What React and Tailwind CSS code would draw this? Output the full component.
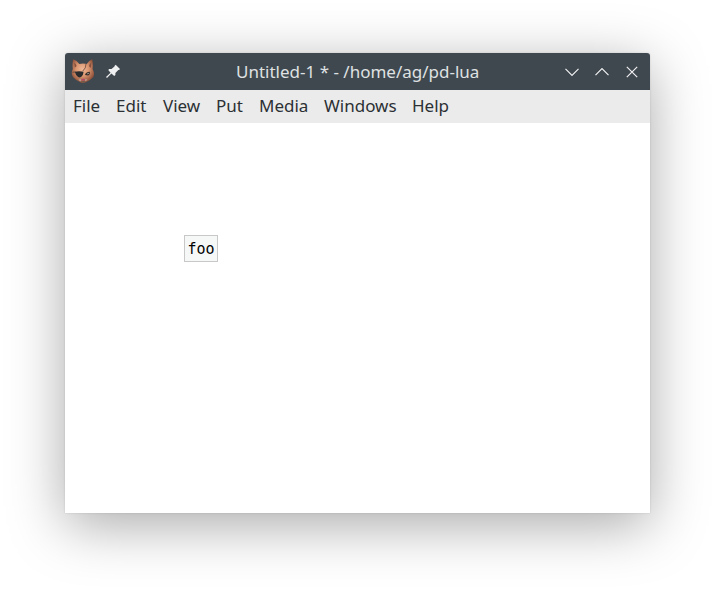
const menus = [
  ["File", "w-[43px]"],
  ["Edit", "w-[47px]"],
  ["View", "w-[53px]"],
  ["Put", "w-[43px]"],
  ["Media", "w-[65px]"],
  ["Windows", "w-[88px]"],
  ["Help", "w-[40px]"],
];

function CatIcon() {
  return (
    <svg width="24" height="25" viewBox="0 0 24 25" className="shrink-0">
      <defs>
        <radialGradient id="fur" cx="0.48" cy="0.42" r="0.58">
          <stop offset="0" stopColor="#f0b998" />
          <stop offset="0.5" stopColor="#d9956f" />
          <stop offset="1" stopColor="#8c4e38" />
        </radialGradient>
      </defs>
      <path d="M2.2 0.3 Q5.8 1.2 8.3 5 Q12 4 15.8 5 Q18 1.4 21.2 0.3 Q22.3 5 21.6 10 Q24 14.5 22.3 18 Q19.5 21 16.5 22.2 Q12.5 25.5 8.5 22.8 Q4.5 20.8 2 18 Q-0.4 14.5 1.8 10 Q1 5 2.2 0.3Z" fill="url(#fur)" />
      <path d="M3.2 3.5 Q5.3 5 5.6 7 L3.8 8.8Z M20.2 3.5 Q18.3 5 18 7.2 L19.8 9Z" fill="#85503e" />
      <path d="M15 5 Q15.2 9 11.8 12" stroke="#69483c" strokeWidth="0.8" fill="none" />
      <path d="M1.5 13.2 L4.5 13" stroke="#5d4238" strokeWidth="0.9" />
      <path d="M3.8 12.8 Q8 11.9 12.6 12.8 Q12.4 16 10.3 17.8 Q8.6 19 6.8 17.8 Q4.8 16.5 3.8 12.8Z" fill="#292b2d" />
      <path d="M14 16 Q14.6 13 18.8 12.8 Q19.4 15.8 17 16.6Z" fill="#382f2b" />
      <path d="M16.4 14.8 L17.7 14.4" stroke="#d7d0ca" strokeWidth="0.9" />
      <path d="M7.5 20.3 L10.4 20 L10 22.3 L8.4 22Z M14 20 L16.5 20.2 L15.4 21.8 L14.1 22.3Z" fill="#b6978b" />
      <path d="M10.3 20.2 Q12.2 19.2 14.2 20.2 L13.5 21.6 L11 21.6Z" fill="#b5486a" />
      <path d="M9.8 22.4 Q12.3 21.6 14.8 22.4 L12.5 24Z" fill="#6c5c4b" />
    </svg>
  );
}

function PinIcon() {
  return (
    <svg width="16" height="16" viewBox="0 0 16 16" className="shrink-0">
      <path d="M10.7 0.8 L15 5.1 L14.1 6.1 L13.3 6.1 L10.4 9 L10.4 11 L9.2 12 L6.4 9.6 L2 14 L1 13 L5.6 8.7 L3.2 6.1 L4.2 5.1 L6.5 5.1 L9.5 2.4 L9.5 1.9Z" fill="#eff0f1" />
    </svg>
  );
}

function WindowButton({ d }) {
  return (
    <svg width="18" height="18" viewBox="0 0 18 18" fill="none" stroke="#eff0f1" strokeWidth="1.2">
      <path d={d} />
    </svg>
  );
}

export default function App() {
  return (
    <div className="h-[590px] w-[715px] overflow-hidden bg-white pt-[53px] pl-[65px] font-['Noto_Sans',sans-serif]">
      <div className="flex h-[460px] w-[585px] flex-col overflow-hidden rounded-t-[3px] bg-white shadow-[0_12px_56px_rgba(0,0,0,0.34),0_0_2px_rgba(0,0,0,0.15)]">
        <header className="flex h-[37px] shrink-0 items-center bg-[#40484f] pr-[9px] pl-[6px]">
          <CatIcon />
          <div className="ml-[10px] flex">
            <PinIcon />
          </div>
          <h1 className="ml-[50px] w-[313px] pl-[65px] text-[17px] leading-[24px] whitespace-nowrap text-[#dfe1e2]">
            Untitled-1 * - /home/ag/pd-lua
          </h1>
          <div className="ml-auto flex gap-3">
            <WindowButton d="M2.5 5.8 L9 12.3 L15.5 5.8" />
            <WindowButton d="M2.5 12.2 L9 5.7 L15.5 12.2" />
            <WindowButton d="M3.8 3.8 L14.2 14.2 M14.2 3.8 L3.8 14.2" />
          </div>
        </header>
        <nav className="flex h-[33px] shrink-0 items-center bg-[#ebebeb] pb-[2px] pl-2 text-[17px] leading-[24px] text-[#2b3034]">
          {menus.map(([label, width]) => (
            <span key={label} className={`${width} shrink-0 whitespace-nowrap`}>
              {label}
            </span>
          ))}
        </nav>
        <main className="flex-1 pt-[112px] pl-[119px]">
          <div className="flex h-[27px] w-[34px] items-center border border-[#c8c8c8] bg-[#f6f8f8] pt-[2px] pl-[2.5px] font-['DejaVu_Sans_Mono',monospace] text-[15px] leading-none text-black">
            foo
          </div>
        </main>
      </div>
    </div>
  );
}
